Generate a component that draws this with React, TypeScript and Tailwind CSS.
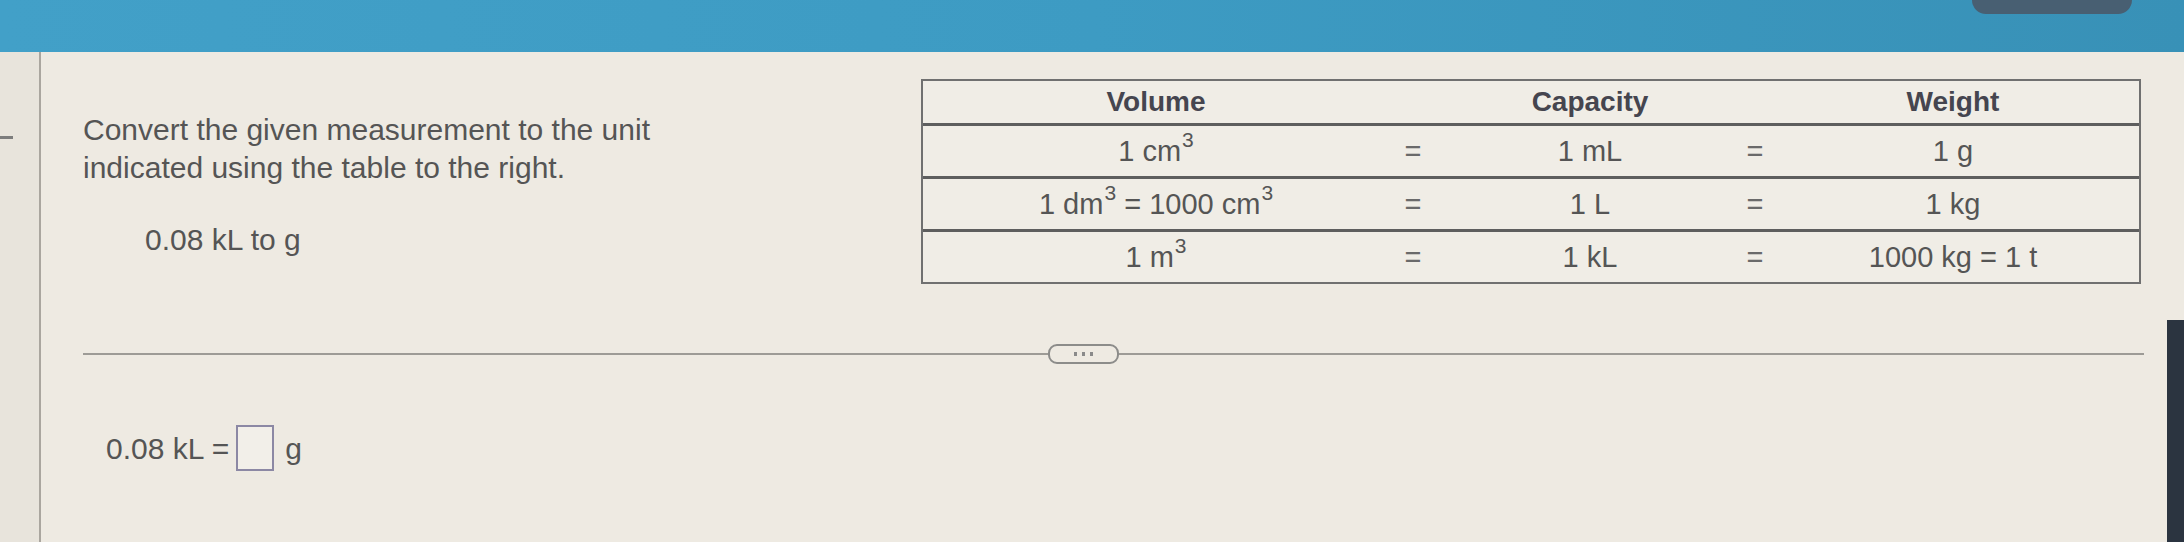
import React from "react";

const Sup = ({ children }: { children: React.ReactNode }) => (
  <sup className="text-[21px] -top-[14px] ml-[1px]">{children}</sup>
);

const rows: { v: React.ReactNode; c: string; w: string }[] = [
  {
    v: (
      <>
        1 cm<Sup>3</Sup>
      </>
    ),
    c: "1 mL",
    w: "1 g",
  },
  {
    v: (
      <>
        1 dm<Sup>3</Sup> = 1000 cm<Sup>3</Sup>
      </>
    ),
    c: "1 L",
    w: "1 kg",
  },
  {
    v: (
      <>
        1 m<Sup>3</Sup>
      </>
    ),
    c: "1 kL",
    w: "1000 kg = 1 t",
  },
];

export default function App() {
  return (
    <div
      className="w-[2184px] h-[542px] overflow-hidden flex flex-col bg-[#eeeae2]"
      style={{ fontFamily: '"Liberation Sans", Arial, sans-serif' }}
    >
      {/* header */}
      <div className="h-[52px] shrink-0 flex bg-gradient-to-r from-[#42a0c8] via-[#3d9bc3] to-[#3891b7]">
        <div className="ml-auto mr-[52px] w-[160px] h-[14px] rounded-b-[14px] bg-[#485f72]" />
      </div>

      <div className="flex flex-1 min-h-0">
        {/* left gutter */}
        <div className="w-[41px] shrink-0 bg-[#e8e4dc] border-r-2 border-[#aaa69f] pt-[84px]">
          <div className="w-[13px] h-[3px] bg-[#7d7d7d]" />
        </div>

        {/* main */}
        <div className="flex-1 flex flex-col pl-[42px] pr-[23px]">
          <div className="flex pt-[27px]">
            <div className="w-[838px] shrink-0 pt-[32px] text-[30px] leading-[38px] text-[#555555]">
              <div>Convert the given measurement to the unit</div>
              <div>indicated using the table to the right.</div>
              <div className="pl-[62px] mt-[34px]">0.08 kL to g</div>
            </div>

            {/* table */}
            <div className="w-[1220px] border-2 border-[#707070] bg-[#f0ede6] text-[29px] text-[#555555]">
              <div className="grid grid-cols-[466px_48px_306px_24px_1fr] h-[42px] items-center font-bold text-[28px] text-[#45454f]">
                <div className="text-center">Volume</div>
                <div />
                <div className="text-center">Capacity</div>
                <div />
                <div className="text-center">Weight</div>
              </div>
              {rows.map((r, i) => (
                <div
                  key={i}
                  className="grid grid-cols-[466px_48px_306px_24px_1fr] h-[53px] items-center border-t-[3px] border-[#5e5e5e] leading-none"
                >
                  <div className="text-center whitespace-nowrap">{r.v}</div>
                  <div className="text-center text-[#6a6a6a]">=</div>
                  <div className="text-center">{r.c}</div>
                  <div className="text-center text-[#6a6a6a]">=</div>
                  <div className="text-center">{r.w}</div>
                </div>
              ))}
            </div>
          </div>

          {/* divider */}
          <div className="flex items-center mt-[60px] h-[20px]">
            <div className="w-[965px] h-[2px] bg-[#9d9b96]" />
            <div className="w-[71px] h-[20px] rounded-[9px] border-2 border-[#8c8c8a] flex items-center justify-center gap-[5px]">
              <span className="w-[3px] h-[4px] bg-[#8a8a8a]" />
              <span className="w-[3px] h-[4px] bg-[#8a8a8a]" />
              <span className="w-[3px] h-[4px] bg-[#8a8a8a]" />
            </div>
            <div className="flex-1 h-[2px] bg-[#9d9b96]" />
          </div>

          {/* answer */}
          <div className="flex items-center mt-[61px] pl-[23px] text-[30px] text-[#555555]">
            <span>0.08 kL =</span>
            <span className="ml-[7px] w-[38px] h-[46px] border-2 border-[#8c88a4] bg-[#f2efe9]" />
            <span className="ml-[11px]">g</span>
          </div>
        </div>

        {/* right photo edge */}
        <div className="w-[17px] shrink-0 flex flex-col">
          <div className="h-[268px]" />
          <div className="flex-1 bg-[#2b3440]" />
        </div>
      </div>
    </div>
  );
}
